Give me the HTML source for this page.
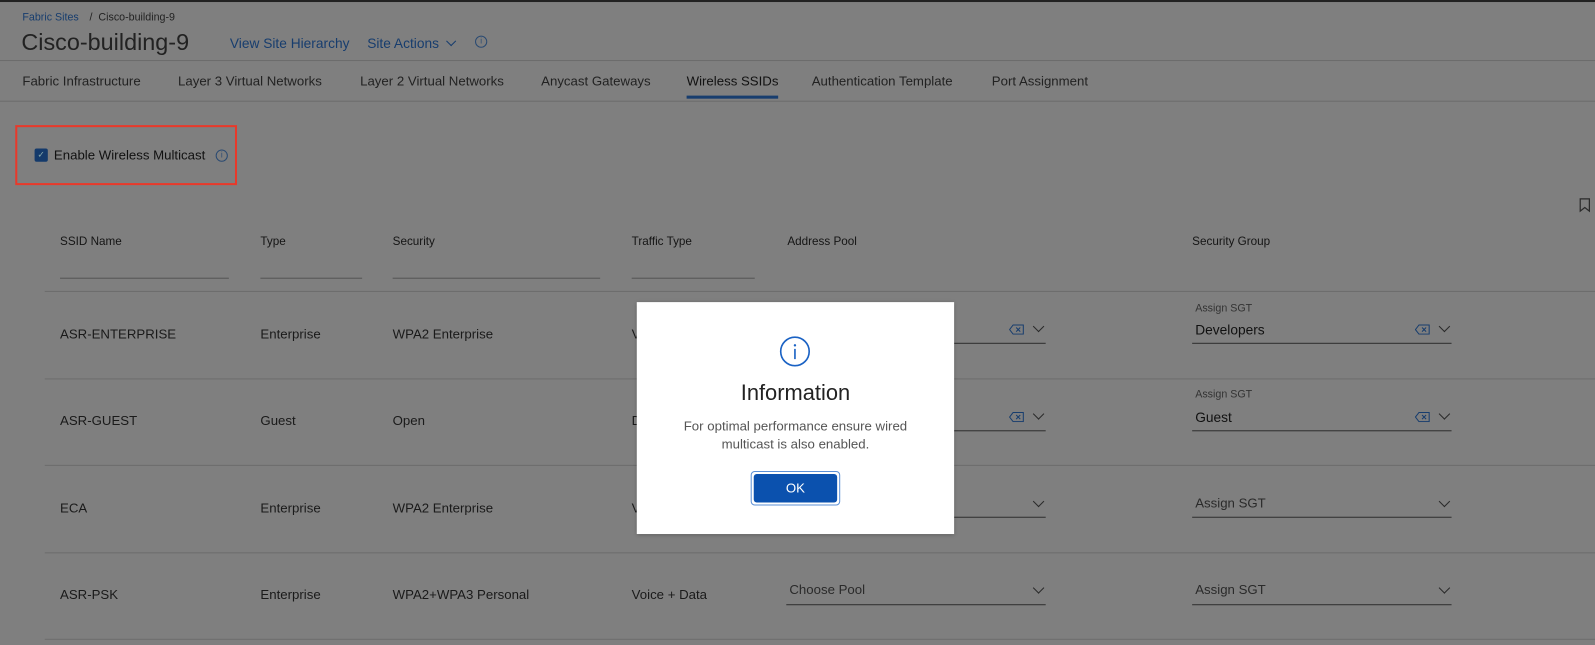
<!DOCTYPE html>
<html><head><meta charset="utf-8"><style>
*{margin:0;padding:0;box-sizing:border-box}
body{width:1595px;height:645px;background:#7f7f7f;font-family:"Liberation Sans",sans-serif;color:#1c1c1c;position:relative;overflow:hidden}
#w{position:absolute;left:0;top:0;width:1568px;height:634px;transform:scale(1.0172);transform-origin:0 0}
.a{position:absolute;white-space:nowrap}
.ln{position:absolute;height:1px;background:#6c6c6c}
.link{color:#173d6e}
.th{font-size:11.5px;color:#151515}
.td{font-size:13px;color:#1a1a1a}
.tab{font-size:13px;color:#222;top:72px}
.ul{position:absolute;height:1px;background:#2e2e2e}
.chev{position:absolute;width:8px;height:8px;border-right:1.3px solid #2a2a2a;border-bottom:1.3px solid #2a2a2a;transform:rotate(45deg)}
.clr{position:absolute;width:15px;height:10px}
</style></head><body><div id="w">
<div style="position:absolute;left:0;top:0;width:1568px;height:2px;background:#222"></div>
<div class="a link" style="left:22px;top:11px;font-size:10.5px">Fabric Sites</div>
<div class="a" style="left:88px;top:11px;font-size:10.5px;color:#222">/&nbsp; Cisco-building-9</div>
<div class="a" style="left:21px;top:28px;font-size:23px;color:#222">Cisco-building-9</div>
<div class="a link" style="left:226px;top:35px;font-size:13.5px">View Site Hierarchy</div>
<div class="a link" style="left:361px;top:35px;font-size:13.5px">Site Actions</div>
<div class="chev" style="left:440px;top:37px;width:7px;height:7px;border-color:#173d6e"></div>
<div class="a" style="left:467px;top:35px;width:12px;height:12px;border:1px solid #2a4a72;border-radius:50%;font-size:8px;text-align:center;line-height:10px;color:#2a4a72">i</div>
<div class="ln" style="left:0;top:59px;width:1568px"></div>
<div class="a tab" style="left:22px">Fabric Infrastructure</div>
<div class="a tab" style="left:175px">Layer 3 Virtual Networks</div>
<div class="a tab" style="left:354px">Layer 2 Virtual Networks</div>
<div class="a tab" style="left:532px">Anycast Gateways</div>
<div class="a tab" style="left:675px;color:#111">Wireless SSIDs</div>
<div style="position:absolute;left:675px;top:94px;width:90px;height:3px;background:#173d6e"></div>
<div class="a tab" style="left:798px">Authentication Template</div>
<div class="a tab" style="left:975px">Port Assignment</div>
<div class="ln" style="left:0;top:99px;width:1568px"></div>
<div style="position:absolute;left:15px;top:123px;width:218px;height:59px;border:2px solid #e8392a"></div>
<div class="a" style="left:34px;top:146px;width:13px;height:13px;background:#143a6b;border-radius:2px;color:#8aa;font-size:9px;text-align:center;line-height:13px">✓</div>
<div class="a" style="left:53px;top:145px;font-size:13px;color:#111">Enable Wireless Multicast</div>
<div class="a" style="left:212px;top:147px;width:12px;height:12px;border:1px solid #2a4a72;border-radius:50%;font-size:8px;text-align:center;line-height:10px;color:#2a4a72">i</div>
<svg class="a" style="left:1552px;top:194px" width="12" height="15"><path d="M1.5 1.5h9v12l-4.5-3.5-4.5 3.5z" fill="none" stroke="#2a2a2a" stroke-width="1.2"/></svg>
<div class="a th" style="left:59px;top:232px">SSID Name</div>
<div class="a th" style="left:256px;top:232px">Type</div>
<div class="a th" style="left:386px;top:232px">Security</div>
<div class="a th" style="left:621px;top:232px">Traffic Type</div>
<div class="a th" style="left:774px;top:232px">Address Pool</div>
<div class="a th" style="left:1172px;top:232px">Security Group</div>
<div class="ln" style="left:59px;top:273px;width:166px;background:#555"></div>
<div class="ln" style="left:256px;top:273px;width:100px;background:#555"></div>
<div class="ln" style="left:386px;top:273px;width:204px;background:#555"></div>
<div class="ln" style="left:621px;top:273px;width:121px;background:#555"></div>
<div class="ln" style="left:44px;top:286px;width:1524px"></div>
<div class="ln" style="left:44px;top:372px;width:1524px"></div>
<div class="ln" style="left:44px;top:457px;width:1524px"></div>
<div class="ln" style="left:44px;top:543px;width:1524px"></div>
<div class="ln" style="left:44px;top:628px;width:1524px"></div>
<div class="a td" style="left:59px;top:321px">ASR-ENTERPRISE</div>
<div class="a td" style="left:256px;top:321px">Enterprise</div>
<div class="a td" style="left:386px;top:321px">WPA2 Enterprise</div>
<div class="a td" style="left:59px;top:406px">ASR-GUEST</div>
<div class="a td" style="left:256px;top:406px">Guest</div>
<div class="a td" style="left:386px;top:406px">Open</div>
<div class="a td" style="left:59px;top:492px">ECA</div>
<div class="a td" style="left:256px;top:492px">Enterprise</div>
<div class="a td" style="left:386px;top:492px">WPA2 Enterprise</div>
<div class="a td" style="left:59px;top:577px">ASR-PSK</div>
<div class="a td" style="left:256px;top:577px">Enterprise</div>
<div class="a td" style="left:386px;top:577px">WPA2+WPA3 Personal</div>
<div class="a td" style="left:621px;top:577px">Voice + Data</div>
<div class="ul" style="left:773px;top:337px;width:255px"></div>
<div class="ul" style="left:773px;top:423px;width:255px"></div>
<div class="ul" style="left:773px;top:508px;width:255px"></div>
<div class="ul" style="left:773px;top:594px;width:255px"></div>
<div class="a td" style="left:776px;top:572px;color:#2a2a2a">Choose Pool</div>
<div class="chev" style="left:1017px;top:317px"></div>
<div class="chev" style="left:1017px;top:403px"></div>
<div class="chev" style="left:1017px;top:489px"></div>
<div class="chev" style="left:1017px;top:574px"></div>
<svg class="clr" style="left:992px;top:319px" viewBox="0 0 15 10"><path d="M4 0.5h10v9h-10l-3.5-4.5z" fill="none" stroke="#173d6e"/><path d="M7 3l4 4M11 3l-4 4" stroke="#173d6e"/></svg>
<svg class="clr" style="left:992px;top:405px" viewBox="0 0 15 10"><path d="M4 0.5h10v9h-10l-3.5-4.5z" fill="none" stroke="#173d6e"/><path d="M7 3l4 4M11 3l-4 4" stroke="#173d6e"/></svg>
<div class="a" style="left:1175px;top:297px;font-size:10.5px;color:#333">Assign SGT</div>
<div class="a td" style="left:1175px;top:317px;font-size:13.5px;color:#111">Developers</div>
<div class="ul" style="left:1172px;top:337px;width:255px"></div>
<div class="a" style="left:1175px;top:382px;font-size:10.5px;color:#333">Assign SGT</div>
<div class="a td" style="left:1175px;top:403px;font-size:13.5px;color:#111">Guest</div>
<div class="ul" style="left:1172px;top:423px;width:255px"></div>
<div class="a td" style="left:1175px;top:487px;color:#2a2a2a">Assign SGT</div>
<div class="ul" style="left:1172px;top:508px;width:255px"></div>
<div class="a td" style="left:1175px;top:572px;color:#2a2a2a">Assign SGT</div>
<div class="ul" style="left:1172px;top:594px;width:255px"></div>
<div class="chev" style="left:1416px;top:317px"></div>
<div class="chev" style="left:1416px;top:403px"></div>
<div class="chev" style="left:1416px;top:489px"></div>
<div class="chev" style="left:1416px;top:574px"></div>
<svg class="clr" style="left:1391px;top:319px" viewBox="0 0 15 10"><path d="M4 0.5h10v9h-10l-3.5-4.5z" fill="none" stroke="#173d6e"/><path d="M7 3l4 4M11 3l-4 4" stroke="#173d6e"/></svg>
<svg class="clr" style="left:1391px;top:405px" viewBox="0 0 15 10"><path d="M4 0.5h10v9h-10l-3.5-4.5z" fill="none" stroke="#173d6e"/><path d="M7 3l4 4M11 3l-4 4" stroke="#173d6e"/></svg>
<div class="a td" style="left:621px;top:321px">V</div>
<div class="a td" style="left:621px;top:406px">D</div>
<div class="a td" style="left:621px;top:492px">V</div>
<div style="position:absolute;left:626px;top:297px;width:312px;height:228px;background:#fff;box-shadow:0 1px 4px rgba(0,0,0,.3)"></div>
<svg class="a" style="left:766px;top:330px" width="31" height="31"><circle cx="15.5" cy="15.5" r="14" fill="none" stroke="#1a62c4" stroke-width="1.6"/><circle cx="15.5" cy="9.5" r="1.2" fill="#1a62c4"/><path d="M15.5 13v10" stroke="#1a62c4" stroke-width="1.6"/></svg>
<div class="a" style="left:626px;width:312px;top:374px;text-align:center;font-size:21.5px;color:#222">Information</div>
<div class="a" style="left:626px;width:312px;top:410px;text-align:center;font-size:13px;line-height:18px;color:#555;white-space:normal">For optimal performance ensure wired<br>multicast is also enabled.</div>
<div style="position:absolute;left:738px;top:463px;width:88px;height:34px;border:1px solid #5b8fd6;border-radius:4px;padding:2px"><div style="width:100%;height:100%;background:#0b51ae;border-radius:3px;color:#fff;font-size:13px;text-align:center;line-height:28px">OK</div></div>
</div></body></html>
